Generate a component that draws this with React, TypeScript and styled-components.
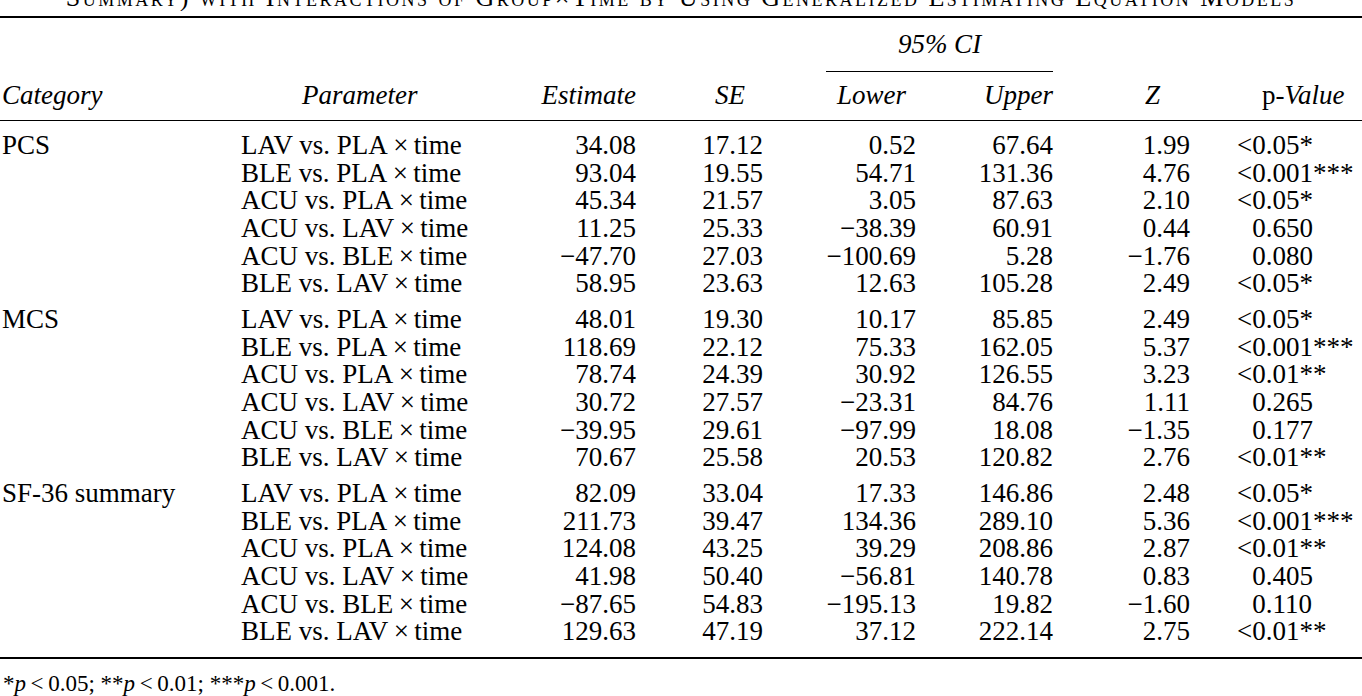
import styled, { createGlobalStyle } from 'styled-components';

const GlobalStyle = createGlobalStyle`
  html, body {
    margin: 0;
    padding: 0;
    background: #fff;
  }
  body {
    color: #000;
    font-family: "Liberation Serif", "Times New Roman", serif;
  }
`;

// shared column grid: category | parameter | estimate | SE | lower | upper | Z | p
const COLS = '239px 279px 116px 127px 153px 137px 137px 1fr';

const Page = styled.div`
  width: 1362px;
  overflow: hidden;
`;

const TitleStrip = styled.div`
  height: 11px;
  overflow: hidden;
  display: flex;
  align-items: flex-end;
  justify-content: center;
  margin-bottom: 5px;
`;

const Title = styled.div`
  font-size: 26px;
  line-height: 1;
  font-variant: small-caps;
  letter-spacing: 2.5px;
  white-space: nowrap;
`;

const Table = styled.div`
  border-top: 2px solid #000;
  border-bottom: 2px solid #000;
  font-size: 27px;
`;

const Head = styled.div`
  display: grid;
  grid-template-columns: ${COLS};
  padding-left: 2px;
  padding-bottom: 11px;
  border-bottom: 1px solid #000;
  line-height: 28px;
`;

const CiSpan = styled.div`
  grid-column: 5 / 7;
  margin-left: 63px;
  padding-top: 12px;
  padding-bottom: 13px;
  margin-bottom: 9px;
  border-bottom: 1px solid #000;
  text-align: center;
  font-style: italic;
`;

const Cell = styled.div<{ $align?: 'left' | 'right'; $pl?: number; $pr?: number }>`
  text-align: ${(p) => p.$align || 'left'};
  padding-left: ${(p) => p.$pl || 0}px;
  padding-right: ${(p) => p.$pr || 0}px;
  white-space: nowrap;
`;

const HeadCell = styled(Cell)`
  grid-row: 2;
  font-style: italic;
`;

const Upright = styled.span`
  font-style: normal;
`;

const Body = styled.div`
  padding: 11px 0 11px;
  display: flex;
  flex-direction: column;
  gap: 8px;
`;

const Group = styled.div`
  display: grid;
  grid-template-columns: ${COLS};
  padding-left: 2px;
  line-height: 27.65px;
`;

const Lt = styled.span<{ $ghost?: boolean }>`
  visibility: ${(p) => (p.$ghost ? 'hidden' : 'visible')};
`;

const Footnote = styled.div`
  margin-top: 12px;
  padding-left: 3px;
  font-size: 23px;
  line-height: 26px;
  white-space: nowrap;
`;

type Row = [string, string, string, string, string, string, string];

const groups: { name: string; rows: Row[] }[] = [
  {
    name: 'PCS',
    rows: [
      ['LAV vs. PLA', '34.08', '17.12', '0.52', '67.64', '1.99', '<0.05*'],
      ['BLE vs. PLA', '93.04', '19.55', '54.71', '131.36', '4.76', '<0.001***'],
      ['ACU vs. PLA', '45.34', '21.57', '3.05', '87.63', '2.10', '<0.05*'],
      ['ACU vs. LAV', '11.25', '25.33', '\u221238.39', '60.91', '0.44', '0.650'],
      ['ACU vs. BLE', '\u221247.70', '27.03', '\u2212100.69', '5.28', '\u22121.76', '0.080'],
      ['BLE vs. LAV', '58.95', '23.63', '12.63', '105.28', '2.49', '<0.05*'],
    ],
  },
  {
    name: 'MCS',
    rows: [
      ['LAV vs. PLA', '48.01', '19.30', '10.17', '85.85', '2.49', '<0.05*'],
      ['BLE vs. PLA', '118.69', '22.12', '75.33', '162.05', '5.37', '<0.001***'],
      ['ACU vs. PLA', '78.74', '24.39', '30.92', '126.55', '3.23', '<0.01**'],
      ['ACU vs. LAV', '30.72', '27.57', '\u221223.31', '84.76', '1.11', '0.265'],
      ['ACU vs. BLE', '\u221239.95', '29.61', '\u221297.99', '18.08', '\u22121.35', '0.177'],
      ['BLE vs. LAV', '70.67', '25.58', '20.53', '120.82', '2.76', '<0.01**'],
    ],
  },
  {
    name: 'SF-36 summary',
    rows: [
      ['LAV vs. PLA', '82.09', '33.04', '17.33', '146.86', '2.48', '<0.05*'],
      ['BLE vs. PLA', '211.73', '39.47', '134.36', '289.10', '5.36', '<0.001***'],
      ['ACU vs. PLA', '124.08', '43.25', '39.29', '208.86', '2.87', '<0.01**'],
      ['ACU vs. LAV', '41.98', '50.40', '\u221256.81', '140.78', '0.83', '0.405'],
      ['ACU vs. BLE', '\u221287.65', '54.83', '\u2212195.13', '19.82', '\u22121.60', '0.110'],
      ['BLE vs. LAV', '129.63', '47.19', '37.12', '222.14', '2.75', '<0.01**'],
    ],
  },
];

function PValue({ value }: { value: string }) {
  const less = value.startsWith('<');
  return (
    <>
      <Lt $ghost={ !less }>&lt;</Lt>
      { less ? value.slice(1) : value }
    </>
  );
}

export default function App() {
  return (
    <Page>
      <GlobalStyle />
      <TitleStrip>
        <Title>
          Summary) with Interactions of Group×Time by Using Generalized Estimating Equation Models
        </Title>
      </TitleStrip>
      <Table>
        <Head>
          <CiSpan>95% CI</CiSpan>
          <HeadCell style={ { gridColumn: 1 } }>Category</HeadCell>
          <HeadCell $pl={ 61 }>Parameter</HeadCell>
          <HeadCell $align="right">Estimate</HeadCell>
          <HeadCell $align="right" $pr={ 18 }>SE</HeadCell>
          <HeadCell $align="right" $pr={ 10 }>Lower</HeadCell>
          <HeadCell $align="right">Upper</HeadCell>
          <HeadCell $align="right" $pr={ 30 }>Z</HeadCell>
          <HeadCell $pl={ 72 }>
            <Upright>p-</Upright>Value
          </HeadCell>
        </Head>
        <Body>
          { groups.map((group) => (
            <Group key={ group.name }>
              { group.rows.map((row, i) => (
                <div key={ row[0] } style={ { display: 'contents' } }>
                  <Cell>{ i === 0 ? group.name : '' }</Cell>
                  <Cell>{ row[0] }{ '\u2009×\u2009' }time</Cell>
                  <Cell $align="right">{ row[1] }</Cell>
                  <Cell $align="right">{ row[2] }</Cell>
                  <Cell $align="right">{ row[3] }</Cell>
                  <Cell $align="right">{ row[4] }</Cell>
                  <Cell $align="right">{ row[5] }</Cell>
                  <Cell $pl={ 47 }><PValue value={ row[6] } /></Cell>
                </div>
              )) }
            </Group>
          )) }
        </Body>
      </Table>
      <Footnote>
        *<i>p</i>{ '\u2009<\u2009' }0.05; **<i>p</i>{ '\u2009<\u2009' }0.01; ***<i>p</i>{ '\u2009<\u2009' }0.001.
      </Footnote>
    </Page>
  );
}
